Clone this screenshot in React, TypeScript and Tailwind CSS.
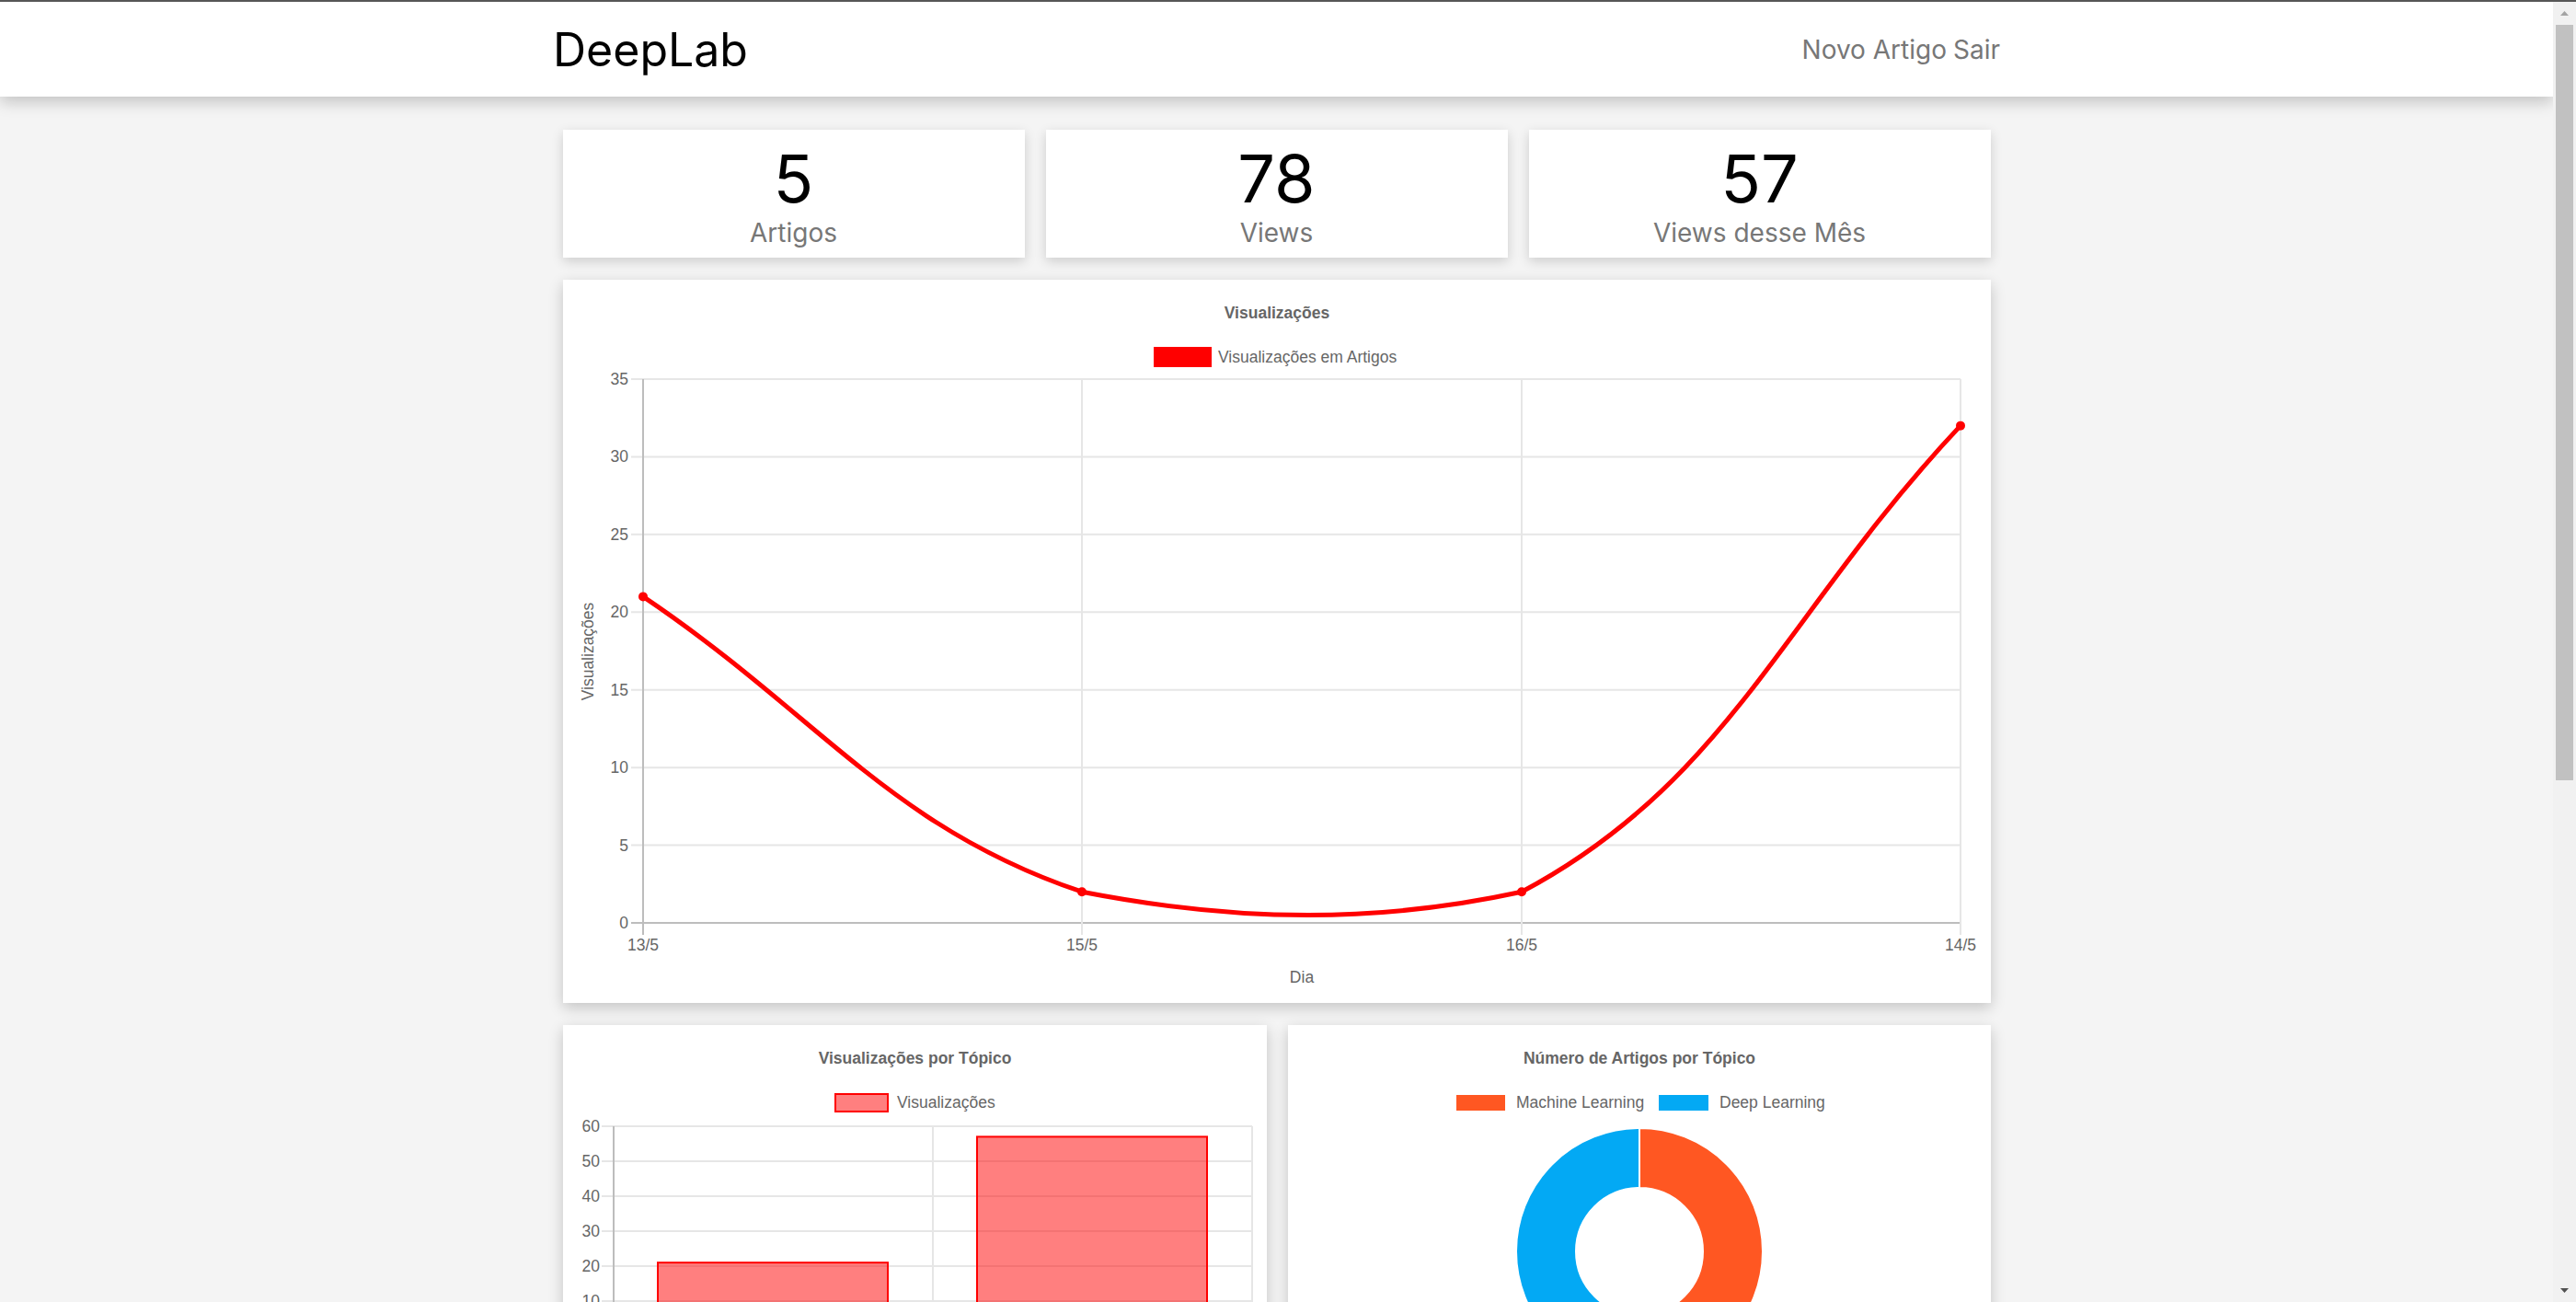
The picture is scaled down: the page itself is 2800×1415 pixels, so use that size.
import React from "react";

type Pt = { x: number; y: number };

const chartFont = "font-['Liberation_Sans',Arial,sans-serif]";

// chart.js style bezier (tension 0.4, control points kept inside the plot area)
function splinePath(pts: Pt[], t: number, area: { l: number; r: number; t: number; b: number }) {
  const clamp = (v: number, a: number, b: number) => Math.max(a, Math.min(b, v));
  const cps = pts.map((p, i) => {
    const prev = pts[i - 1] ?? p;
    const next = pts[i + 1] ?? p;
    const d01 = Math.hypot(p.x - prev.x, p.y - prev.y);
    const d12 = Math.hypot(next.x - p.x, next.y - p.y);
    const sum = d01 + d12 || 1;
    const fa = (t * d01) / sum;
    const fb = (t * d12) / sum;
    return {
      prev: {
        x: clamp(p.x - fa * (next.x - prev.x), area.l, area.r),
        y: clamp(p.y - fa * (next.y - prev.y), area.t, area.b),
      },
      next: {
        x: clamp(p.x + fb * (next.x - prev.x), area.l, area.r),
        y: clamp(p.y + fb * (next.y - prev.y), area.t, area.b),
      },
    };
  });
  let d = `M${pts[0].x} ${pts[0].y}`;
  for (let i = 1; i < pts.length; i++) {
    d += ` C${cps[i - 1].next.x} ${cps[i - 1].next.y} ${cps[i].prev.x} ${cps[i].prev.y} ${pts[i].x} ${pts[i].y}`;
  }
  return d;
}

function arc(cx: number, cy: number, R: number, r: number, a0: number, a1: number) {
  const p = (rad: number, a: number) => `${cx + rad * Math.cos(a)} ${cy + rad * Math.sin(a)}`;
  const large = a1 - a0 > Math.PI ? 1 : 0;
  return `M${p(R, a0)} A${R} ${R} 0 ${large} 1 ${p(R, a1)} L${p(r, a1)} A${r} ${r} 0 ${large} 0 ${p(r, a0)} Z`;
}

function StatCard({ value, label }: { value: string; label: string }) {
  return (
    <div className="h-[139px] bg-white shadow-[0_4px_12px_rgba(0,0,0,0.16)] flex flex-col items-center pt-[17px]">
      <span className="text-[72px] leading-none text-black">{value}</span>
      <span className="mt-[9px] text-[28px] leading-none text-[#777]">{label}</span>
    </div>
  );
}

function LineChart() {
  const area = { l: 87, r: 1519, t: 108, b: 699 };
  const ys = (v: number) => 699 - v * 16.886;
  const xs = [87, 564, 1042, 1519];
  const labels = ["13/5", "15/5", "16/5", "14/5"];
  const data = [21, 2, 2, 32];
  const pts = data.map((v, i) => ({ x: xs[i], y: ys(v) }));
  const ticks = [0, 5, 10, 15, 20, 25, 30, 35];
  return (
    <svg width="1552" height="786" className={chartFont}>
      <text x="776" y="42" textAnchor="middle" fontWeight="bold" fontSize="17.5" fill="#666">
        Visualizações
      </text>
      <rect x="642" y="73" width="63" height="22" fill="#ff0000" />
      <text x="712" y="90" fontSize="17.5" fill="#666">
        Visualizações em Artigos
      </text>
      {ticks.map((v) => (
        <g key={v}>
          <line x1="74" x2="1519" y1={ys(v)} y2={ys(v)} stroke={v === 0 ? "#bdbdbd" : "#e6e6e6"} strokeWidth="2" />
          <text x="71" y={ys(v) + 6} textAnchor="end" fontSize="17.5" fill="#666">
            {v}
          </text>
        </g>
      ))}
      {xs.map((x, i) => (
        <g key={x}>
          <line x1={x} x2={x} y1="108" y2="712" stroke={i === 0 ? "#bdbdbd" : "#e6e6e6"} strokeWidth="2" />
          <text x={x} y="729" textAnchor="middle" fontSize="17.5" fill="#666">
            {labels[i]}
          </text>
        </g>
      ))}
      <text x="803" y="764" textAnchor="middle" fontSize="17.5" fill="#666">
        Dia
      </text>
      <text x="33" y="404" textAnchor="middle" fontSize="17.5" fill="#666" transform="rotate(-90 33 404)">
        Visualizações
      </text>
      <path d={splinePath(pts, 0.4, area)} fill="none" stroke="#ff0000" strokeWidth="5" />
      {pts.map((p) => (
        <circle key={p.x} cx={p.x} cy={p.y} r="5" fill="#ff0000" />
      ))}
    </svg>
  );
}

function BarChart() {
  const ys = (v: number) => 338 - v * 3.8;
  const ticks = [0, 10, 20, 30, 40, 50, 60];
  const bars = [
    { x: 103, v: 21, label: "Machine Learning" },
    { x: 450, v: 57, label: "Deep Learning" },
  ];
  return (
    <svg width="765" height="560" className={chartFont}>
      <text x="382.5" y="42" textAnchor="middle" fontWeight="bold" fontSize="17.5" fill="#666">
        Visualizações por Tópico
      </text>
      <rect x="296" y="75" width="57" height="19" fill="rgba(255,0,0,0.5)" stroke="#ff0000" strokeWidth="2" />
      <text x="363" y="90" fontSize="17.5" fill="#666">
        Visualizações
      </text>
      {ticks.map((v) => (
        <g key={v}>
          <line x1="42" x2="749" y1={ys(v)} y2={ys(v)} stroke={v === 0 ? "#bdbdbd" : "#e6e6e6"} strokeWidth="2" />
          <text x="40" y={ys(v) + 6} textAnchor="end" fontSize="17.5" fill="#666">
            {v}
          </text>
        </g>
      ))}
      {[55, 402, 749].map((x, i) => (
        <line key={x} x1={x} x2={x} y1="110" y2="348" stroke={i === 0 ? "#bdbdbd" : "#e6e6e6"} strokeWidth="2" />
      ))}
      {bars.map((b) => (
        <g key={b.x}>
          <rect x={b.x} y={ys(b.v)} width="250" height={338 - ys(b.v)} fill="rgba(255,0,0,0.5)" stroke="#ff0000" strokeWidth="2" />
          <text x={b.x + 125} y="368" textAnchor="middle" fontSize="17.5" fill="#666">
            {b.label}
          </text>
        </g>
      ))}
    </svg>
  );
}

function DonutChart() {
  const cx = 382;
  const cy = 246;
  return (
    <svg width="764" height="560" className={chartFont}>
      <text x="382" y="42" textAnchor="middle" fontWeight="bold" fontSize="17.5" fill="#666">
        Número de Artigos por Tópico
      </text>
      <rect x="182" y="75" width="55" height="19" fill="#ff5722" stroke="#fff" strokeWidth="2" />
      <text x="248" y="90" fontSize="17.5" fill="#666">
        Machine Learning
      </text>
      <rect x="402" y="75" width="56" height="19" fill="#03a9f4" stroke="#fff" strokeWidth="2" />
      <text x="469" y="90" fontSize="17.5" fill="#666">
        Deep Learning
      </text>
      <path d={arc(cx, cy, 134, 69, -Math.PI / 2, Math.PI / 2)} fill="#ff5722" stroke="#fff" strokeWidth="2" />
      <path d={arc(cx, cy, 134, 69, Math.PI / 2, (3 * Math.PI) / 2)} fill="#03a9f4" stroke="#fff" strokeWidth="2" />
    </svg>
  );
}

function Scrollbar() {
  return (
    <div className="w-[25px] shrink-0 bg-[#f1f1f1] flex flex-col">
      <div className="h-[25px] flex items-center justify-center">
        <svg width="9" height="5" viewBox="0 0 9 5">
          <path d="M0 5 L4.5 0 L9 5 Z" fill="#a3a3a3" />
        </svg>
      </div>
      <div className="h-[821px] mx-[3px] bg-[#c1c1c1]" />
      <div className="flex-1" />
      <div className="h-[25px] flex items-center justify-center">
        <svg width="9" height="5" viewBox="0 0 9 5">
          <path d="M0 0 L9 0 L4.5 5 Z" fill="#505050" />
        </svg>
      </div>
    </div>
  );
}

export default function App() {
  return (
    <div className="h-[1415px] w-full overflow-hidden flex flex-col border-t-2 border-[#575757] bg-[#f4f4f4] font-['Inter',sans-serif]">
      <div className="flex flex-1 min-h-0">
        <div className="flex-1 min-w-0 overflow-hidden flex flex-col">
          <header className="relative z-10 h-[103px] shrink-0 bg-white shadow-[0_6px_16px_rgba(0,0,0,0.2)]">
            <div className="w-[1573px] h-full mx-auto flex items-center justify-between">
              <span className="text-[50px] leading-none text-black">DeepLab</span>
              <nav className="flex items-center gap-[7px] text-[28px] leading-none text-[#777]">
                <a>Novo Artigo</a>
                <a>Sair</a>
              </nav>
            </div>
          </header>

          <main className="w-[1552px] mx-auto mt-[36px] flex flex-col gap-[24px]">
            <div className="grid grid-cols-3 gap-[23px]">
              <StatCard value="5" label="Artigos" />
              <StatCard value="78" label="Views" />
              <StatCard value="57" label="Views desse Mês" />
            </div>

            <div className="h-[786px] bg-white shadow-[0_5px_15px_rgba(0,0,0,0.2)]">
              <LineChart />
            </div>

            <div className="grid grid-cols-[765px_764px] gap-[23px]">
              <div className="h-[560px] bg-white shadow-[0_5px_15px_rgba(0,0,0,0.2)]">
                <BarChart />
              </div>
              <div className="h-[560px] bg-white shadow-[0_5px_15px_rgba(0,0,0,0.2)]">
                <DonutChart />
              </div>
            </div>
          </main>
        </div>
        <Scrollbar />
      </div>
    </div>
  );
}
